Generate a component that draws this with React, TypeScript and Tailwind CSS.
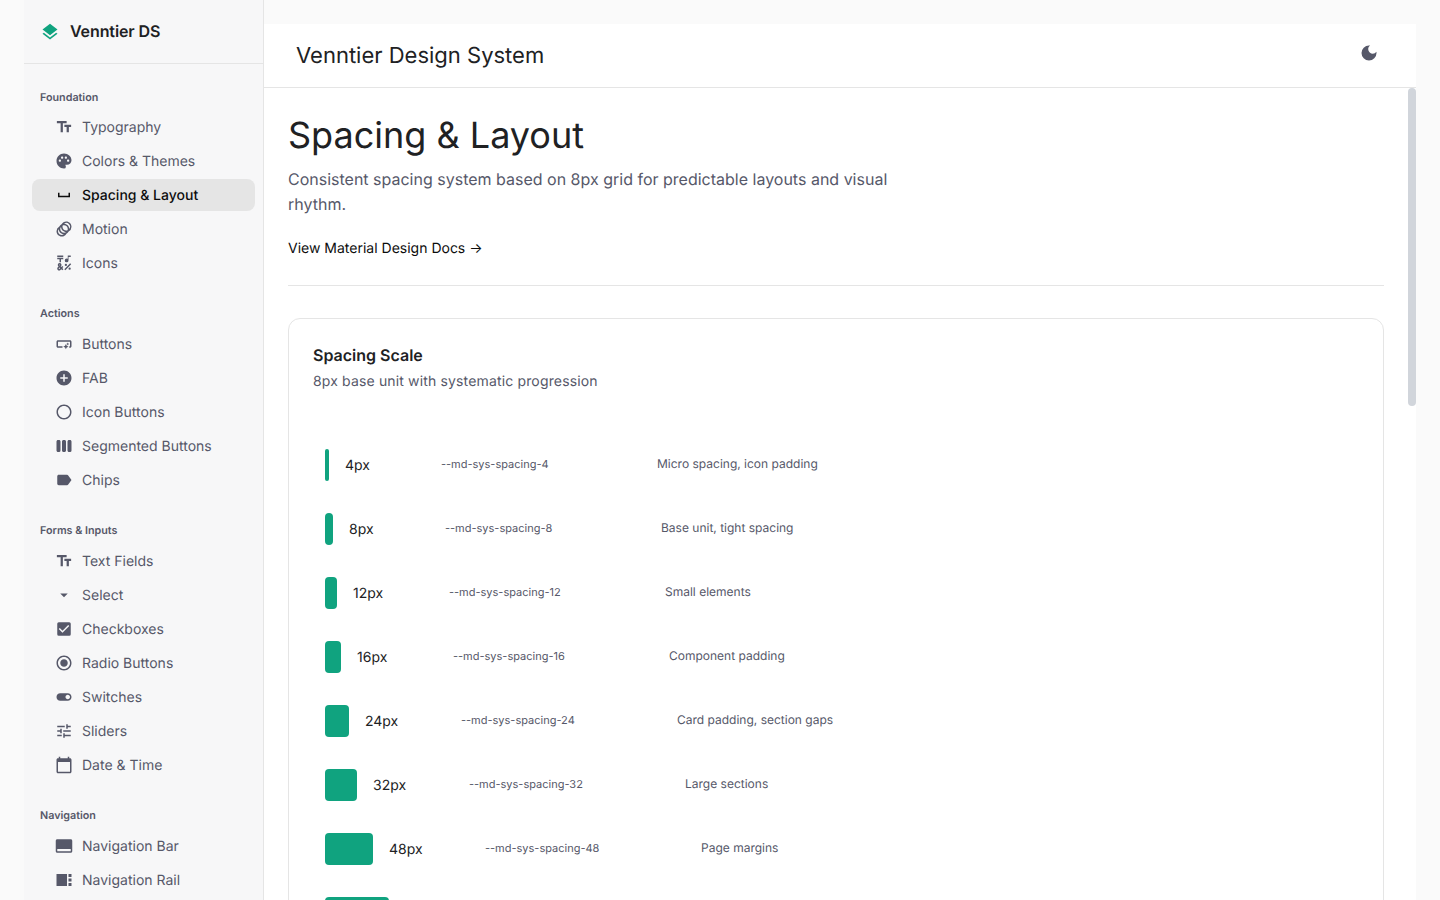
import type { ComponentType } from 'react';
import {
  MdAddCircle, MdAnimation, MdArrowDropDown, MdCalendarToday, MdCheckBox, MdDarkMode, MdEmojiSymbols,
  MdLabel, MdLayers, MdPalette, MdRadioButtonChecked, MdRadioButtonUnchecked, MdSmartButton, MdSpaceBar,
  MdTextFields, MdToggleOn, MdTune, MdViewSidebar, MdViewWeek, MdCallToAction,
} from 'react-icons/md';

type NavItem = { label: string; icon: ComponentType<{ className?: string }>; active?: boolean };

// Sidebar sections
const sections: { title: string; items: NavItem[] }[] = [
  {
    title: 'Foundation',
    items: [
      { label: 'Typography', icon: MdTextFields },
      { label: 'Colors & Themes', icon: MdPalette },
      { label: 'Spacing & Layout', icon: MdSpaceBar, active: true },
      { label: 'Motion', icon: MdAnimation },
      { label: 'Icons', icon: MdEmojiSymbols },
    ],
  },
  {
    title: 'Actions',
    items: [
      { label: 'Buttons', icon: MdSmartButton },
      { label: 'FAB', icon: MdAddCircle },
      { label: 'Icon Buttons', icon: MdRadioButtonUnchecked },
      { label: 'Segmented Buttons', icon: MdViewWeek },
      { label: 'Chips', icon: MdLabel },
    ],
  },
  {
    title: 'Forms & Inputs',
    items: [
      { label: 'Text Fields', icon: MdTextFields },
      { label: 'Select', icon: MdArrowDropDown },
      { label: 'Checkboxes', icon: MdCheckBox },
      { label: 'Radio Buttons', icon: MdRadioButtonChecked },
      { label: 'Switches', icon: MdToggleOn },
      { label: 'Sliders', icon: MdTune },
      { label: 'Date & Time', icon: MdCalendarToday },
    ],
  },
  {
    title: 'Navigation',
    items: [
      { label: 'Navigation Bar', icon: MdCallToAction },
      { label: 'Navigation Rail', icon: MdViewSidebar },
    ],
  },
];

const spacing = [
  { px: 4, w: 'w-[4px]', label: '4px', token: '--md-sys-spacing-4', usage: 'Micro spacing, icon padding' },
  { px: 8, w: 'w-[8px]', label: '8px', token: '--md-sys-spacing-8', usage: 'Base unit, tight spacing' },
  { px: 12, w: 'w-[12px]', label: '12px', token: '--md-sys-spacing-12', usage: 'Small elements' },
  { px: 16, w: 'w-[16px]', label: '16px', token: '--md-sys-spacing-16', usage: 'Component padding' },
  { px: 24, w: 'w-[24px]', label: '24px', token: '--md-sys-spacing-24', usage: 'Card padding, section gaps' },
  { px: 32, w: 'w-[32px]', label: '32px', token: '--md-sys-spacing-32', usage: 'Large sections' },
  { px: 48, w: 'w-[48px]', label: '48px', token: '--md-sys-spacing-48', usage: 'Page margins' },
  { px: 64, w: 'w-[64px]', label: '64px', token: '--md-sys-spacing-64', usage: 'Major sections' },
];

const Sidebar = () => (
  <aside className="w-[240px] h-screen shrink-0 overflow-hidden bg-[#f7f7f8] border-r border-[#e5e5e5]">
    <div className="h-[64px] flex items-center gap-[10px] pl-[16px] border-b border-[#e5e5e5]">
      <MdLayers className="w-5 h-5 text-[#10a37f]" />
      <span className="text-[16px] font-semibold tracking-[-0.1px] text-[#202123] -mt-[1px]">Venntier DS</span>
    </div>
    <div className="px-2 pt-[19px]">
      {sections.map((section) => (
        <div key={section.title} className="group mb-[20px]">
          <p className="h-[28px] pt-[2px] mb-[1px] group-first:mb-0 px-2 flex items-center text-[10.75px] font-semibold text-[#565869]">{section.title}</p>
          <nav className="flex flex-col gap-[2px]">
            {section.items.map((item) => (
              <a
                key={item.label}
                className={`h-[32px] flex items-center gap-[9px] pl-[23px] rounded-lg text-[14px] ${
                  item.active ? 'bg-[#e5e5e5] text-[#0d0d0d] font-medium' : 'text-[#565869]'
                }`}
              >
                <item.icon className={`w-[18px] h-[18px] shrink-0 ${item.active ? 'text-[#0d0d0d]' : 'text-[#565869]'}`} />
                <span>{item.label}</span>
              </a>
            ))}
          </nav>
        </div>
      ))}
    </div>
  </aside>
);

const App = () => (
  <div className="h-screen overflow-hidden flex pl-[24px] pr-[24px] bg-[#fafafa] font-['Inter',sans-serif] [text-rendering:geometricPrecision]">
    <Sidebar />
    <main className="flex-1 min-w-0 pt-[24px] flex flex-col h-screen">
      <header className="h-[64px] shrink-0 bg-white border-b border-[#e5e5e5] flex items-center justify-between pl-[32px] pr-[37px]">
        <h2 className="text-[22px] text-[#202123] leading-[28px]">Venntier Design System</h2>
        <MdDarkMode className="w-5 h-5 text-[#565869] -mt-[6px]" />
      </header>
      <div className="flex-1 min-h-0 flex bg-white">
        <div className="flex-1 min-w-0 overflow-hidden p-[24px]">
          <h1 className="text-[36px] leading-[44px] text-[#202123] mt-[1px]">Spacing & Layout</h1>
          <p className="mt-[10px] max-w-[640px] text-[16px] leading-[25px] text-[#565869]">
            Consistent spacing system based on 8px grid for predictable layouts and visual rhythm.
          </p>
          <a className="mt-[22px] block text-[14px] leading-[20px] text-[#0d0d0d]">View Material Design Docs →</a>
          <hr className="mt-[26px] border-[#e5e5e5]" />
          <section className="mt-[32px] border border-[#e5e5e5] rounded-xl p-[24px]">
            <h3 className="text-[16px] font-semibold leading-[24px] text-[#202123]">Spacing Scale</h3>
            <p className="mt-[5px] text-[14px] leading-[20px] tracking-[0.15px] text-[#565869]">8px base unit with systematic progression</p>
            <div className="mt-[57px] flex flex-col gap-[32px] pl-[12px]">
              {spacing.map((row) => (
                <div key={row.px} className="flex items-center gap-[16px]">
                  <div className={`${row.w} h-[32px] rounded bg-[#10a37f]`} />
                  <span className="w-[80px] text-[14px] text-[#202123]">{row.label}</span>
                  <span className="w-[200px] text-[11px] text-[#565869] -mt-[2px]">{row.token}</span>
                  <span className="text-[12px] text-[#565869] -mt-[2px]">{row.usage}</span>
                </div>
              ))}
            </div>
          </section>
        </div>
        {/* scrollbar */}
        <div className="w-2 shrink-0">
          <div className="h-[318px] rounded-full bg-[#d1d5db]" />
        </div>
      </div>
    </main>
  </div>
);

export default App;
